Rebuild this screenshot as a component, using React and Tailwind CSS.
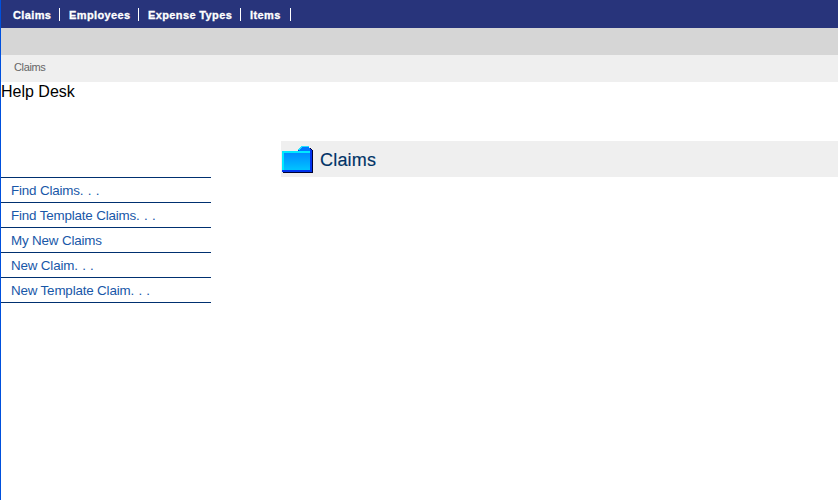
const nav = [
  { label: "Claims", box: "w-[59px] pl-3" },
  { label: "Employees", box: "w-[79px] pl-[9px]" },
  { label: "Expense Types", box: "w-[102px] pl-[9px]" },
  { label: "Items", box: "w-[50px] pl-[9px]" },
];

const links = [
  { label: "Find Claims", more: true },
  { label: "Find Template Claims", more: true },
  { label: "My New Claims", more: false },
  { label: "New Claim", more: true },
  { label: "New Template Claim", more: true },
];

function Folder() {
  return (
    <svg width="32" height="28" viewBox="0 0 32 28" shapeRendering="crispEdges" className="shrink-0">
      <defs>
        <linearGradient id="folder" x1="0" y1="0" x2="0" y2="1">
          <stop offset="0" stopColor="#0088ff" />
          <stop offset="1" stopColor="#00c4ff" />
        </linearGradient>
      </defs>
      <path d="M28 2h1v1h1v1h1v23H1v-1h29V4h-2z" fill="#000030" />
      <path d="M16 5V4h1V3h12v1h1v22H0v-2h28V5z" fill="#0033ee" />
      <path d="M18 2h8v1h2v2H17V3h1z" fill="#0077ff" />
      <path d="M16 4V3h1V2h1V1h1V0h8v1h-7v1h-1v1h-1v1z" fill="#20e0ff" />
      <path d="M20 1h7v1h1v1H19V2h1z" fill="#0077ff" />
      <path d="M2 6h26v18H2z" fill="url(#folder)" />
      <path d="M0 5h28v2H2v17H0z" fill="#00eaff" />
    </svg>
  );
}

export default function App() {
  return (
    <div className="h-[500px] w-[838px] overflow-hidden border-l border-[#0050dd] bg-white font-['Liberation_Sans',Arial,sans-serif]">
      <nav className="flex h-7 items-center bg-[#28347b] pb-px pt-[2px]">
        {nav.map(({ label, box }) => (
          <a key={label} className={`${box} h-[13px] whitespace-nowrap border-r border-white text-[11px] font-bold leading-[15px] tracking-[0.38px] text-white [-webkit-text-stroke:0.3px_white]`}>
            {label}
          </a>
        ))}
      </nav>
      <div className="h-[27px] bg-[#d6d6d6]" />
      <div className="h-[27px] bg-[#efefef] pl-[13px] text-[11px] leading-[25px] tracking-[-0.35px] text-[#666]">Claims</div>
      <div className="h-[59px] text-base leading-[19px] text-black">Help Desk</div>
      <div className="flex">
        <aside className="mr-[70px] mt-9 w-[210px] border-t border-[#003070]">
          {links.map(({ label, more }) => (
            <a key={label} className="block h-[25px] border-b border-[#003070] pl-[10px] text-[13.4px] leading-[25px] tracking-[-0.17px] text-[#1857a8]">
              {label}
              {more && <span className="tracking-[0.25px]">. . .</span>}
            </a>
          ))}
        </aside>
        <header className="flex h-9 flex-1 bg-[#efefef] pl-px pt-[5px]">
          <Folder />
          <h1 className="ml-[6px] text-[18px] leading-7 tracking-[0.2px] text-[#003366] [-webkit-text-stroke:0.15px_#003366]">Claims</h1>
        </header>
      </div>
    </div>
  );
}
